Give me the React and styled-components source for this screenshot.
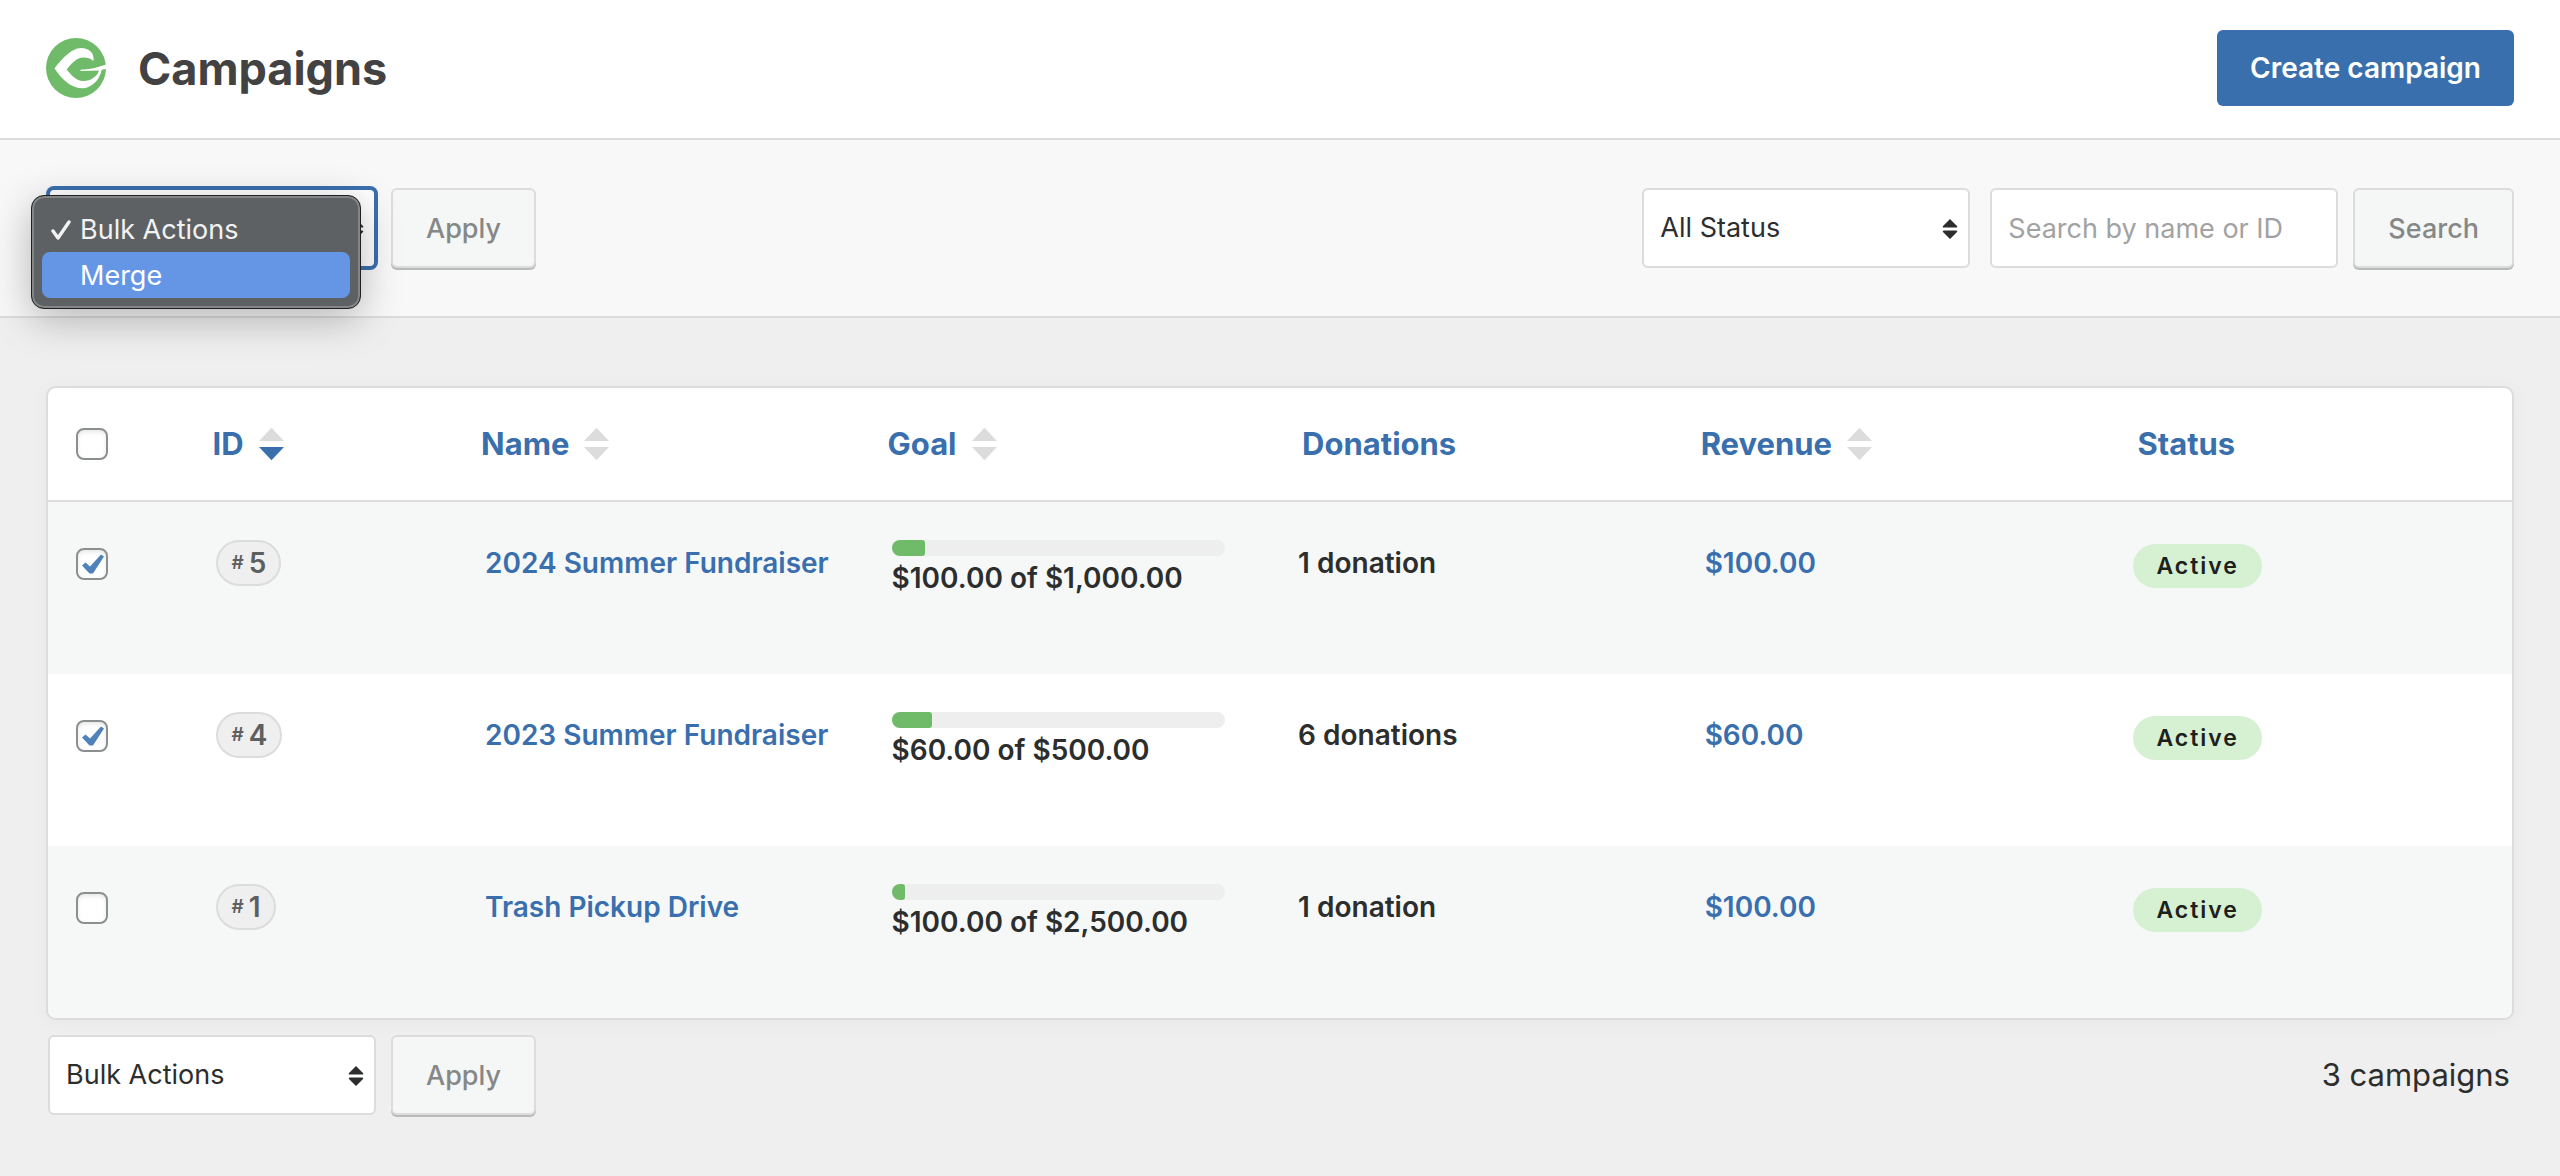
import React, { useState } from "react";
import styled, { createGlobalStyle, css } from "styled-components";

const blue = "#3a6fae";
const green = "#70bb6a";
const line = "#dcdcdc";

const GlobalStyle = createGlobalStyle`
  * {
    box-sizing: border-box;
  }
  body {
    margin: 0;
    min-height: 100vh;
    background-color: #efefef;
    color: #2c2e2e;
    font-family: Inter, "Liberation Sans", sans-serif;
    font-size: 27px;
    line-height: 36px;
  }
`;

const Header = styled.header`
  display: flex;
  align-items: center;
  justify-content: space-between;
  padding: 30px 46px 32px;
  background-color: white;
  border-bottom: 2px solid ${line};
`;
const Brand = styled.div`
  display: flex;
  align-items: center;
  gap: 32px;
`;
const Title = styled.h1`
  margin: 0;
  padding-top: 2px;
  font-size: 45px;
  line-height: 60px;
  font-weight: 700;
  color: #424242;
`;
const CreateButton = styled.button`
  height: 76px;
  padding: 0 33px;
  border: none;
  border-radius: 6px;
  background-color: ${blue};
  color: white;
  font: inherit;
  font-size: 28px;
  font-weight: 600;
  cursor: pointer;
`;

const Toolbar = styled.div`
  display: flex;
  align-items: center;
  justify-content: space-between;
  padding: 48px 46px;
  background-color: #f8f8f8;
  border-bottom: 2px solid ${line};
`;
const Group = styled.form`
  position: relative;
  display: flex;
  align-items: center;
  gap: 15px;
  padding-left: 2px;
`;
const field = css`
  height: 80px;
  border: 2px solid ${line};
  border-radius: 6px;
  background-color: white;
  color: #2c2e2e;
  font: inherit;
`;
const SelectWrapper = styled.div`
  position: relative;
  width: 328px;
  margin-right: ${(props) => (props.$spaced ? "5px" : "0")};
`;
const Select = styled.select`
  ${field}
  appearance: none;
  width: 100%;
  padding: 0 16px;
  ${(props) =>
    props.$open &&
    css`
      border-color: ${blue};
      box-shadow: 0 0 0 2px ${blue};
    `}
`;
const SelectArrows = styled.svg`
  position: absolute;
  right: 12px;
  top: 30px;
  width: 16px;
  height: 22px;
  fill: #2c2e2e;
  pointer-events: none;
`;
const SearchInput = styled.input`
  ${field}
  width: 348px;
  padding: 0 16px;
  &::placeholder {
    color: #a2a2a2;
    opacity: 1;
  }
`;
const Button = styled.button`
  height: 80px;
  padding: 2px 33px 0;
  border: 2px solid ${line};
  border-radius: 6px;
  background-color: #f5f7f7;
  box-shadow: 0 2px 0 #b9bbbb;
  color: #868888;
  font: inherit;
  font-weight: 500;
`;

const Menu = styled.ul`
  position: absolute;
  z-index: 1;
  top: 7px;
  left: -15px;
  width: 330px;
  margin: 0;
  padding: 10px 9px;
  list-style: none;
  border: 1px solid #1f2121;
  border-radius: 13px;
  background-color: #5d6163;
  box-shadow:
    inset 0 0 0 2px #848686,
    0 10px 40px rgba(0, 0, 0, 0.27);
`;
const MenuItem = styled.li`
  display: flex;
  align-items: center;
  gap: 9px;
  height: 46px;
  margin: 0 1px;
  padding: 2px 0 0 9px;
  border-radius: 8px;
  background-color: ${(props) => (props.$active ? "#6596e5" : "transparent")};
  color: ${(props) => (props.$active ? "white" : "#f2f2f2")};
`;
const Tick = styled.svg`
  width: 20px;
  height: 20px;
  fill: none;
  stroke: currentColor;
  stroke-width: 3.4;
  stroke-linecap: round;
  stroke-linejoin: round;
`;

const Content = styled.main`
  padding: 68px 46px;
`;
const Panel = styled.div`
  overflow: hidden;
  border: 2px solid ${line};
  border-radius: 10px;
  background-color: white;
  box-shadow: 0 2px 20px rgba(0, 0, 0, 0.04);
`;
const Table = styled.table`
  width: 100%;
  table-layout: fixed;
  border-collapse: separate;
  border-spacing: 0;
  text-align: left;
`;
const Col = styled.col`
  width: ${(props) => props.$width};
`;
const HeadCell = styled.th`
  height: 114px;
  padding: 0 0 0 ${(props) => (props.$sortable ? "24px" : "32px")};
  border-bottom: 2px solid ${line};
  color: ${blue};
  font-size: 31px;
  font-weight: 700;
`;
const SortButton = styled.button`
  display: flex;
  align-items: center;
  gap: 15px;
  padding: 0;
  border: none;
  background: none;
  color: inherit;
  font: inherit;
  cursor: pointer;
`;
const SortArrows = styled.svg`
  width: 25px;
  height: 34px;
  fill: ${line};
`;
const Row = styled.tr`
  height: 172px;
  &:nth-child(odd) {
    background-color: #f6f8f8;
  }
`;
const Cell = styled.td`
  padding: 38px 0 0 28px;
  vertical-align: top;
  font-size: 28px;
  font-weight: 600;
`;
const StatusCell = styled(Cell)`
  padding-top: 42px;
`;
const CheckCell = styled(Cell)`
  padding-top: 46px;
`;
const CheckHeadCell = styled(HeadCell)`
  padding-left: 28px;
`;
const CheckWrapper = styled.label`
  position: relative;
  display: block;
  width: 32px;
  height: 32px;
`;
const Checkbox = styled.input`
  appearance: none;
  display: block;
  width: 32px;
  height: 32px;
  margin: 0;
  border: 2px solid #8c8f8f;
  border-radius: 8px;
  background-color: white;
  box-shadow: inset 0 2px 4px rgba(0, 0, 0, 0.1);
`;
const CheckMark = styled.svg`
  position: absolute;
  inset: 0;
  fill: #4f82bb;
  pointer-events: none;
`;
const IdPill = styled.span`
  display: inline-flex;
  align-items: center;
  gap: 5px;
  height: 46px;
  padding: 0 13px;
  border: 2px solid ${line};
  border-radius: 23px;
  background-color: #efefef;
  color: #5c5f5f;
`;
const Hash = styled.span`
  font-size: 19px;
`;
const TextLink = styled.a`
  display: inline-block;
  padding-top: 5px;
  color: ${blue};
  text-decoration: none;
`;
const Donations = styled.span`
  display: inline-block;
  padding-top: 5px;
`;
const Track = styled.div`
  width: 333px;
  height: 16px;
  overflow: hidden;
  border-radius: 8px;
  background-color: #eeeeee;
`;
const Bar = styled.div`
  height: 100%;
  border-radius: 0 3px 3px 0;
  background-color: ${green};
`;
const GoalText = styled.div`
  padding-top: 4px;
`;
const StatusPill = styled.span`
  display: inline-block;
  padding: 0 23px;
  border-radius: 22px;
  background-color: #d6f0d2;
  color: #1c211c;
  font-size: 23px;
  line-height: 44px;
  font-weight: 600;
  letter-spacing: 2px;
`;

const Footer = styled.div`
  display: flex;
  align-items: center;
  justify-content: space-between;
  padding: 15px 4px 0 0;
`;
const Count = styled.span`
  font-size: 31px;
`;

const columns = [
  { label: "ID", sortable: true, sorted: true, width: "10.9%" },
  { label: "Name", sortable: true, width: "16.5%" },
  { label: "Goal", sortable: true, width: "16.5%" },
  { label: "Donations", width: "16.5%" },
  { label: "Revenue", sortable: true, width: "17.4%" },
  { label: "Status", width: "16.5%" },
];

const campaigns = [
  {
    id: 5,
    name: "2024 Summer Fundraiser",
    goal: "$100.00 of $1,000.00",
    percent: 10,
    donations: "1 donation",
    revenue: "$100.00",
  },
  {
    id: 4,
    name: "2023 Summer Fundraiser",
    goal: "$60.00 of $500.00",
    percent: 12,
    donations: "6 donations",
    revenue: "$60.00",
  },
  {
    id: 1,
    name: "Trash Pickup Drive",
    goal: "$100.00 of $2,500.00",
    percent: 4,
    donations: "1 donation",
    revenue: "$100.00",
  },
];

const Logo = () => (
  <svg width="60" height="60" viewBox="0 0 60 60" aria-hidden="true">
    <circle cx="30" cy="30" r="30" fill={green} />
    <path
      fill="white"
      d="M8.5 30.5C14 23 25 10 35 10C43 10 48.500 15 47.500 23C45 20.500 41.500 19.500 37.500 19.500C30.500 19.500 25 26 20.700 31.500C25 37 30 43 37.500 43C45 43 51.500 38 53 32.500L34.500 33V31.800C43 31.500 52 29.500 60 26.500V31L55.700 31.700C53.500 42 46 50.200 36 50.200C23.500 50.200 14.500 39 8.500 30.500Z"
    />
  </svg>
);

const Arrows = () => (
  <SelectArrows viewBox="0 0 16 22">
    <path d="M8 1L15 8Q16 9.500 14 9.500H2Q0 9.500 1 8ZM8 21L15 14Q16 12.500 14 12.500H2Q0 12.500 1 14Z" />
  </SelectArrows>
);

const BulkSelect = ({ label, open }) => (
  <SelectWrapper>
    <Select aria-label={label} $open={open} defaultValue="bulk">
      <option value="bulk">Bulk Actions</option>
      <option value="merge">Merge</option>
    </Select>
    <Arrows />
  </SelectWrapper>
);

const Check = ({ label, initial }) => {
  const [checked, setChecked] = useState(initial);
  return (
    <CheckWrapper>
      <Checkbox
        type="checkbox"
        aria-label={label}
        checked={checked}
        onChange={() => setChecked(!checked)}
      />
      {checked && (
        <CheckMark width="32" height="32" viewBox="0 0 32 32">
          <path d="M6 17.500L9.500 14.500L14 18.500L25 6.500L28 8.500L17 25.500H13.500Z" />
        </CheckMark>
      )}
    </CheckWrapper>
  );
};

const App = () => (
  <>
    <GlobalStyle />
    <Header>
      <Brand>
        <Logo />
        <Title>Campaigns</Title>
      </Brand>
      <CreateButton>Create campaign</CreateButton>
    </Header>
    <Toolbar>
      <Group>
        <BulkSelect label="Bulk actions" open />
        <Button type="button">Apply</Button>
        <Menu>
          <MenuItem>
            <Tick viewBox="0 0 20 20">
              <path d="M2 11L7 18L18 2" />
            </Tick>
            Bulk Actions
          </MenuItem>
          <MenuItem $active>
            <Tick viewBox="0 0 20 20" />
            Merge
          </MenuItem>
        </Menu>
      </Group>
      <Group>
        <SelectWrapper $spaced>
          <Select aria-label="Status">
            <option>All Status</option>
          </Select>
          <Arrows />
        </SelectWrapper>
        <SearchInput
          type="text"
          aria-label="Search campaigns"
          placeholder="Search by name or ID"
        />
        <Button type="button">Search</Button>
      </Group>
    </Toolbar>
    <Content>
      <Panel>
        <Table>
          <colgroup>
            <Col $width="5.7%" />
            {columns.map(({ label, width }) => (
              <Col key={label} $width={width} />
            ))}
          </colgroup>
          <thead>
            <tr>
              <CheckHeadCell>
                <Check label="Select all campaigns" initial={false} />
              </CheckHeadCell>
              {columns.map(({ label, sortable, sorted }) => (
                <HeadCell key={label} $sortable={sortable}>
                  {sortable ? (
                    <SortButton>
                      {label}
                      <SortArrows viewBox="0 0 26 34">
                        <path d="M13 0L26 14H0Z" />
                        <path
                          d="M13 34L26 20H0Z"
                          fill={sorted ? blue : undefined}
                        />
                      </SortArrows>
                    </SortButton>
                  ) : (
                    label
                  )}
                </HeadCell>
              ))}
            </tr>
          </thead>
          <tbody>
            {campaigns.map((campaign) => (
              <Row key={campaign.id}>
                <CheckCell>
                  <Check
                    label={`Select ${campaign.name}`}
                    initial={campaign.id !== 1}
                  />
                </CheckCell>
                <Cell>
                  <IdPill>
                    <Hash>#</Hash>
                    {campaign.id}
                  </IdPill>
                </Cell>
                <Cell>
                  <TextLink href="#">{campaign.name}</TextLink>
                </Cell>
                <Cell>
                  <Track>
                    <Bar style={{ width: `${campaign.percent}%` }} />
                  </Track>
                  <GoalText>{campaign.goal}</GoalText>
                </Cell>
                <Cell>
                  <Donations>{campaign.donations}</Donations>
                </Cell>
                <Cell>
                  <TextLink href="#">{campaign.revenue}</TextLink>
                </Cell>
                <StatusCell>
                  <StatusPill>Active</StatusPill>
                </StatusCell>
              </Row>
            ))}
          </tbody>
        </Table>
      </Panel>
      <Footer>
        <Group>
          <BulkSelect label="Bulk actions, bottom" />
          <Button type="button">Apply</Button>
        </Group>
        <Count>3 campaigns</Count>
      </Footer>
    </Content>
  </>
);

export default App;
